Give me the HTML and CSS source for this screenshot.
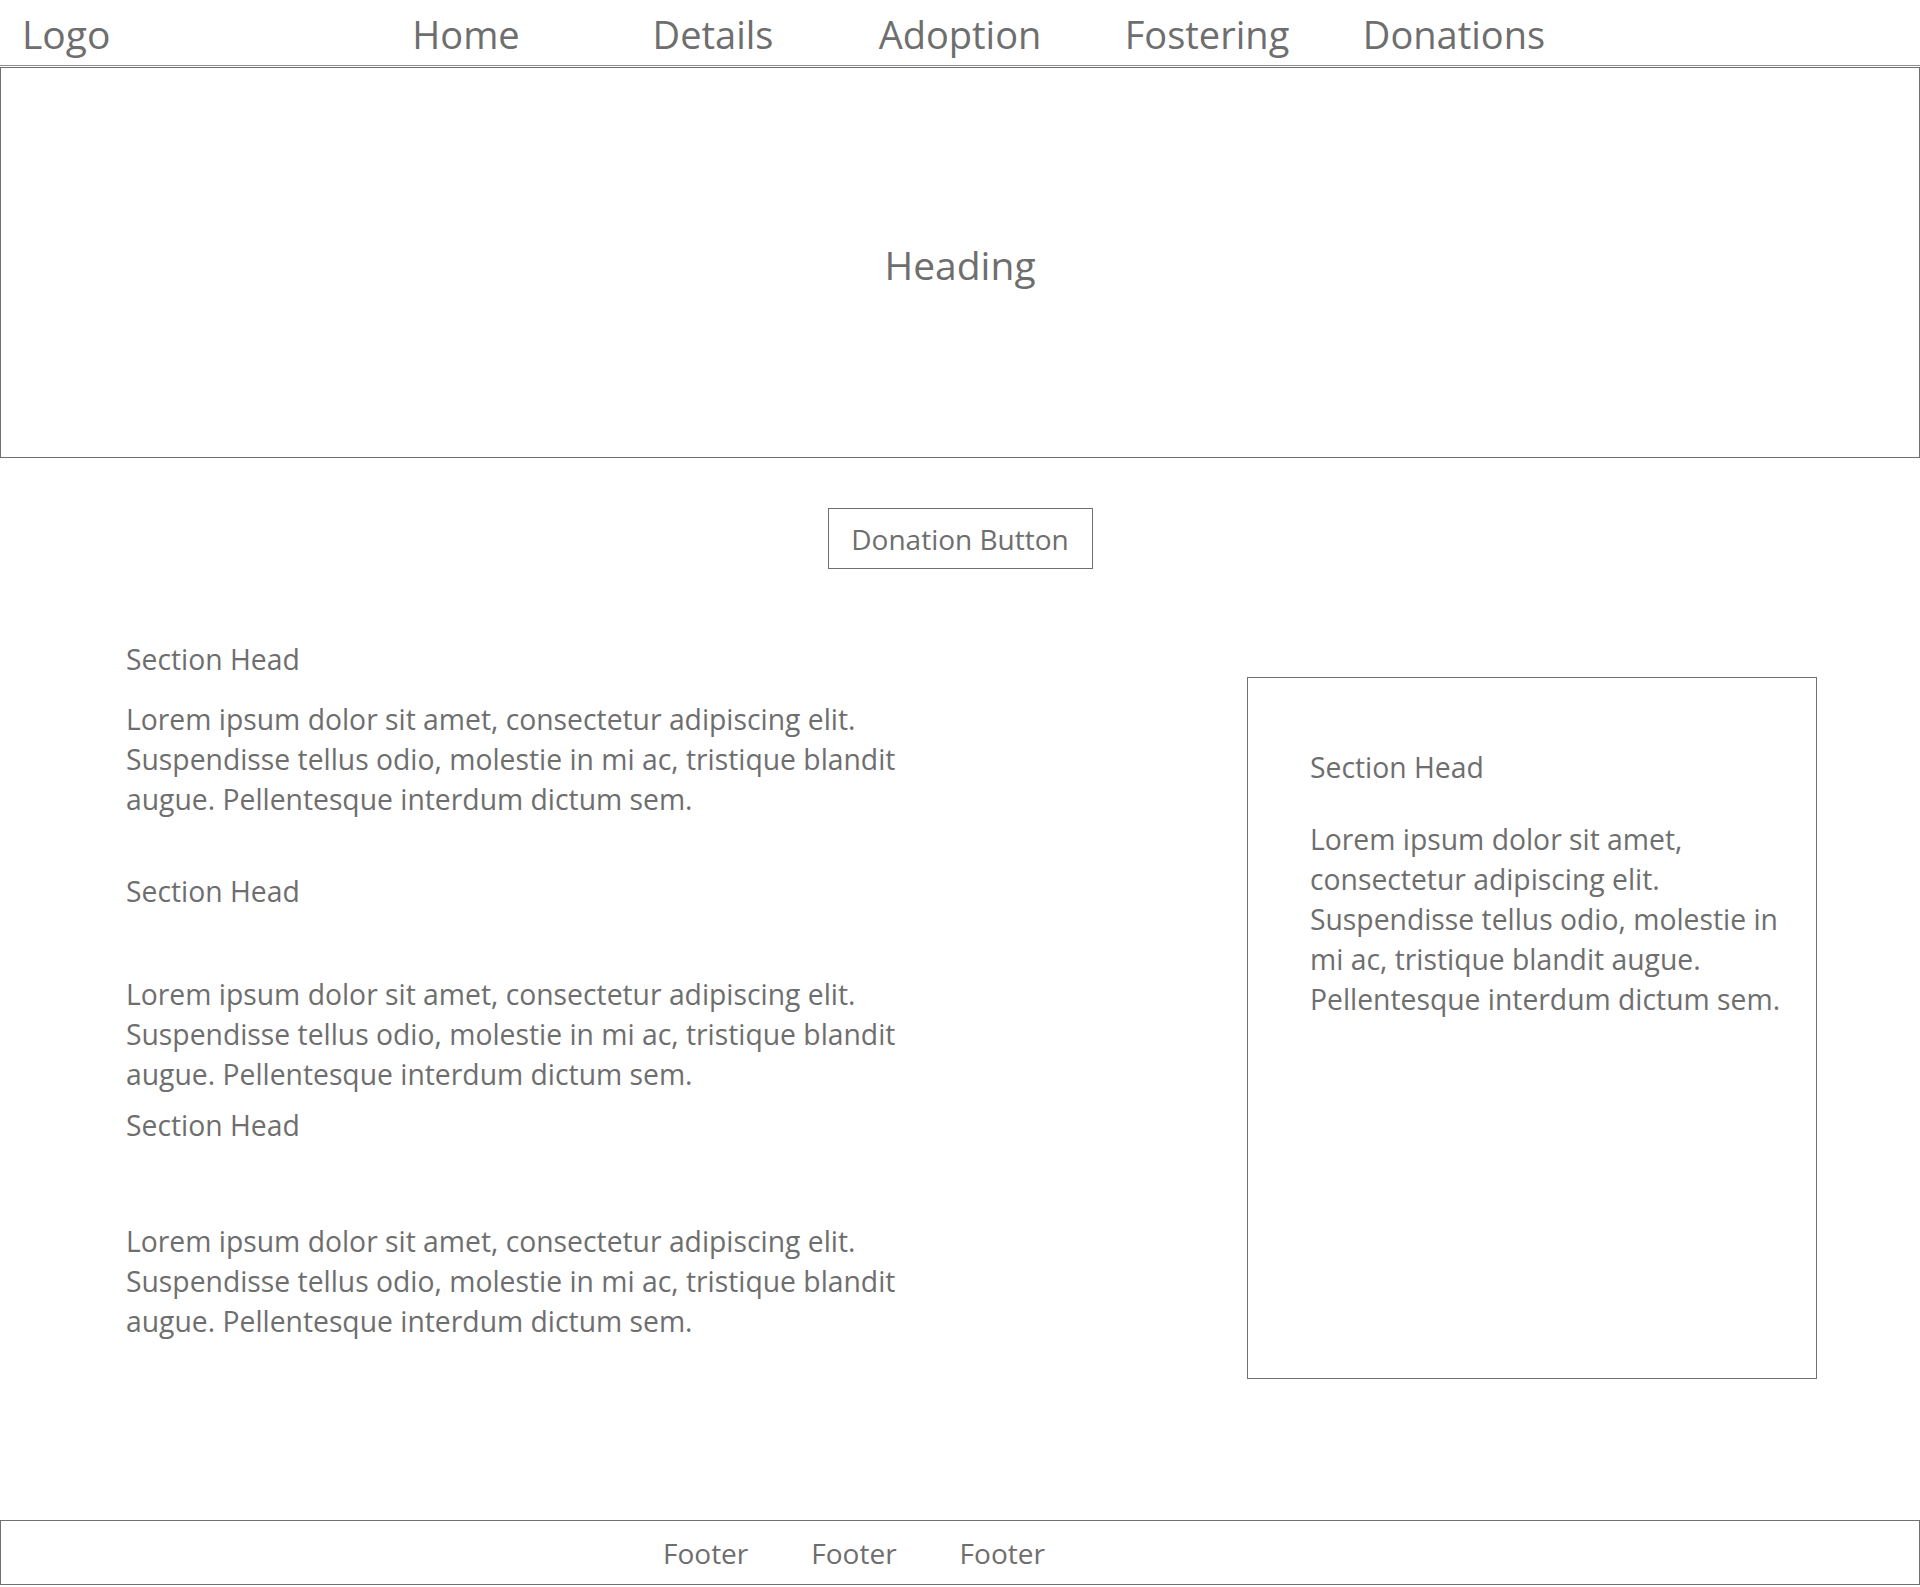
FILE: index.html
```html
<!DOCTYPE html>
<html lang="en">
<head>
  <meta charset="UTF-8">
  <meta name="viewport" content="width=device-width, initial-scale=1.0">
  <title>Donations</title>
  <link rel="stylesheet" href="styles.css">
</head>
<body>
  <header id="top-bar">
    <div class="logo">Logo</div>
    <nav class="main-nav">
      <a href="#">Home</a>
      <a href="#">Details</a>
      <a href="#">Adoption</a>
      <a href="#">Fostering</a>
      <a href="#">Donations</a>
    </nav>
  </header>

  <section id="hero">
    <h1>Heading</h1>
  </section>

  <div class="donate-row">
    <button class="donate-btn">Donation Button</button>
  </div>

  <main id="content">
    <div class="sections">
      <h2 class="section-head head-1">Section Head</h2>
      <p class="section-text text-1">Lorem ipsum dolor sit amet, consectetur adipiscing elit. Suspendisse tellus odio, molestie in mi ac, tristique blandit augue. Pellentesque interdum dictum sem.</p>

      <h2 class="section-head head-2">Section Head</h2>
      <p class="section-text text-2">Lorem ipsum dolor sit amet, consectetur adipiscing elit. Suspendisse tellus odio, molestie in mi ac, tristique blandit augue. Pellentesque interdum dictum sem.</p>

      <h2 class="section-head head-3">Section Head</h2>
      <p class="section-text text-3">Lorem ipsum dolor sit amet, consectetur adipiscing elit. Suspendisse tellus odio, molestie in mi ac, tristique blandit augue. Pellentesque interdum dictum sem.</p>
    </div>

    <aside class="side-box">
      <h2 class="section-head">Section Head</h2>
      <p class="section-text">Lorem ipsum dolor sit amet, consectetur adipiscing elit. Suspendisse tellus odio, molestie in mi ac, tristique blandit augue. Pellentesque interdum dictum sem.</p>
    </aside>
  </main>

  <footer id="bottom-bar">
    <a href="#">Footer</a>
    <a href="#">Footer</a>
    <a href="#">Footer</a>
  </footer>
</body>
</html>
```

FILE: styles.css
```css
body {
  font-family: 'Open Sans', 'Noto Sans', sans-serif;
  margin: 0;
  padding: 0;
  background-color: #fff;
  color: #6e6e6e;
}

a {
  color: inherit;
  text-decoration: none;
}

/* barra superior */
#top-bar {
  display: grid;
  grid-template-columns: 1fr auto 1fr;
  align-items: center;
  height: 66px;
  box-sizing: border-box;
  padding-top: 3px;
  border-bottom: 1px solid #8c8c8c;
  margin-bottom: 1px;
}

.logo {
  padding-left: 22px;
  font-size: 39px;
  line-height: 60px;
}

.main-nav {
  display: flex;
}

.main-nav a {
  width: 247px;
  text-align: center;
  font-size: 38px;
  line-height: 60px;
}

#hero {
  height: 389px;
  border: 1px solid #707070;
  display: flex;
  align-items: center;
  justify-content: center;
}

#hero h1 {
  margin: 3px 0 0;
  font-size: 39px;
  font-weight: normal;
}

.donate-row {
  display: flex;
  justify-content: center;
  margin-top: 50px;
}

.donate-btn {
  width: 265px;
  height: 61px;
  background: #fff;
  border: 1px solid #707070;
  font-family: inherit;
  font-size: 28px;
  color: #6e6e6e;
  padding: 0;
}

#content {
  display: flex;
  justify-content: space-between;
  align-items: flex-start;
  padding: 0 103px 0 126px;
}

.sections {
  width: 810px;
}

.section-head {
  margin: 0;
  font-size: 28.3px;
  font-weight: normal;
  line-height: 40px;
}

.section-text {
  margin: 0;
  font-size: 28.3px;
  line-height: 40px;
}

/* separaciones de la maqueta */
.head-1 { margin-top: 70px; }
.text-1 { margin-top: 20px; }
.head-2 { margin-top: 52px; }
.text-2 { margin-top: 63px; }
.head-3 { margin-top: 11px; }
.text-3 { margin-top: 76px; }

.side-box {
  width: 570px;
  height: 702px;
  box-sizing: border-box;
  margin-top: 108px;
  border: 1px solid #707070;
  padding: 69px 18px 0 62px;
}

.side-box .section-text {
  margin-top: 32px;
}

#bottom-bar {
  display: flex;
  align-items: center;
  gap: 63px;
  height: 63px;
  margin-top: 141px;
  padding-left: 662px;
  border: 1px solid #707070;
}

#bottom-bar a {
  font-size: 28px;
}
```
